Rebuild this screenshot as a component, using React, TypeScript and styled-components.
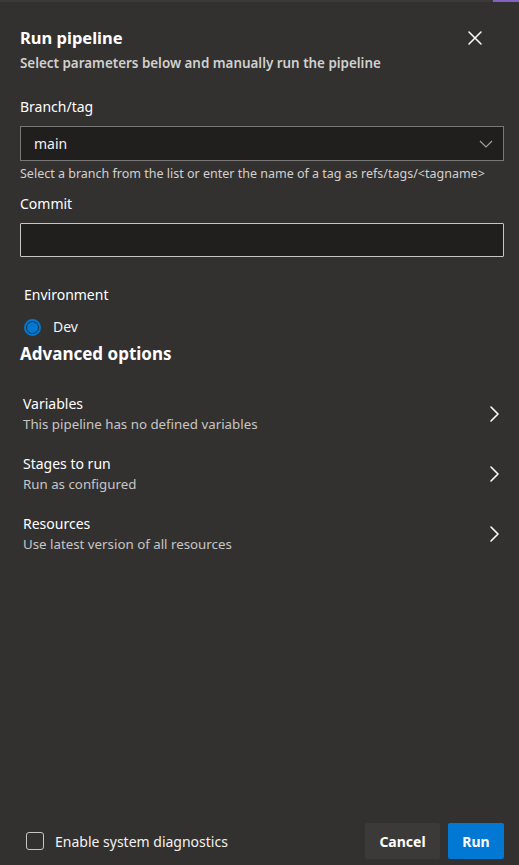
import React, { useState } from 'react';
import styled, { createGlobalStyle } from 'styled-components';

const GlobalStyle = createGlobalStyle`
  html, body {
    margin: 0;
    padding: 0;
    background: #323130;
  }
  * {
    box-sizing: border-box;
  }
`;

const Panel = styled.div`
  width: 519px;
  height: 865px;
  background: #323130;
  color: #ffffff;
  font-family: 'Segoe UI', 'Noto Sans', sans-serif;
  display: flex;
  flex-direction: column;
`;

// thin strip of the page behind the panel
const TopStrip = styled.div`
  height: 2px;
  flex-shrink: 0;
  display: flex;
  background: #3b3a39;
  justify-content: flex-end;
`;

const StripAccent = styled.div`
  width: 26px;
  background: #8661c5;
`;

const Body = styled.div`
  flex: 1;
  padding: 24px 16px 0 20px;
  display: flex;
  flex-direction: column;
`;

const Header = styled.div`
  display: flex;
  align-items: flex-start;
  justify-content: space-between;
`;

const Title = styled.h2`
  margin: 0;
  font-size: 16.5px;
  font-weight: 700;
  line-height: 24px;
  color: #ffffff;
`;

const CloseButton = styled.button`
  background: none;
  border: none;
  padding: 0;
  width: 32px;
  height: 32px;
  margin-top: -4px;
  margin-right: 12px;
  display: flex;
  align-items: center;
  justify-content: center;
  color: #ffffff;
  cursor: pointer;
`;

const Subtitle = styled.div`
  font-size: 13.4px;
  font-weight: 600;
  color: #d2d0ce;
  line-height: 18px;
  margin-top: 0;
`;

const Field = styled.div<{ $top: number }>`
  margin-top: ${p => p.$top}px;
  display: flex;
  flex-direction: column;
`;

const Label = styled.label<{ $indent?: number; $gap?: number }>`
  font-size: 14px;
  line-height: 20px;
  color: #ffffff;
  padding-left: ${p => p.$indent || 0}px;
  margin-bottom: ${p => p.$gap || 9}px;
`;

const SelectBox = styled.div`
  height: 35px;
  width: 484px;
  background: #201f1e;
  border: 1px solid #797775;
  display: flex;
  align-items: center;
  justify-content: space-between;
  padding: 0 10px 0 13px;
  font-size: 14px;
  color: #f3f2f1;
`;

const Hint = styled.div`
  font-size: 12.5px;
  line-height: 16px;
  color: #d2d0ce;
  margin-top: 5px;
`;

const TextInput = styled.input`
  height: 34px;
  width: 484px;
  background: #201f1e;
  border: 1px solid #c8c6c4;
  border-radius: 1px;
  outline: none;
  color: #ffffff;
  font-family: inherit;
  font-size: 14px;
  padding: 0 8px;
`;

const RadioRow = styled.label`
  display: flex;
  align-items: center;
  gap: 12px;
  padding-left: 4px;
  font-size: 14px;
  color: #f3f2f1;
  line-height: 20px;
`;

const RadioDot = styled.span`
  width: 17px;
  height: 17px;
  border-radius: 50%;
  border: 2px solid #0078d4;
  display: flex;
  align-items: center;
  justify-content: center;

  &::after {
    content: '';
    width: 11px;
    height: 11px;
    border-radius: 50%;
    background: #0078d4;
  }
`;

const SectionTitle = styled.h3`
  margin: 5px 0 0;
  font-size: 17px;
  font-weight: 700;
  line-height: 24px;
  color: #ffffff;
`;

const OptionList = styled.div`
  margin-top: 28px;
  display: flex;
  flex-direction: column;
  gap: 20px;
`;

const OptionRow = styled.div`
  display: flex;
  align-items: center;
  justify-content: space-between;
  padding-left: 3px;
  padding-right: 2px;
  cursor: pointer;
`;

const OptionText = styled.div`
  display: flex;
  flex-direction: column;
`;

const OptionName = styled.div`
  font-size: 14px;
  line-height: 20px;
  color: #ffffff;
`;

const OptionDesc = styled.div`
  font-size: 13.3px;
  line-height: 20px;
  color: #c8c6c4;
`;

const Footer = styled.div`
  display: flex;
  align-items: center;
  justify-content: space-between;
  padding: 0 15px 6px 26px;
  height: 42px;
  flex-shrink: 0;
`;

const CheckRow = styled.label`
  display: flex;
  align-items: center;
  gap: 11px;
  font-size: 14px;
  color: #f3f2f1;
`;

const CheckBox = styled.span`
  width: 18px;
  height: 18px;
  border: 1px solid #c8c6c4;
  border-radius: 3px;
`;

const Buttons = styled.div`
  display: flex;
  gap: 8px;
`;

const Button = styled.button<{ $primary?: boolean }>`
  height: 36px;
  padding: 0 14px;
  min-width: ${p => (p.$primary ? 56 : 75)}px;
  border: none;
  border-radius: 2px;
  font-family: inherit;
  font-size: 14px;
  font-weight: 700;
  color: #ffffff;
  background: ${p => (p.$primary ? '#0078d4' : '#3b3a39')};
  cursor: pointer;
`;

const Chevron = () => (
  <svg width="14" height="18" viewBox="0 0 14 18" fill="none">
    <path d="M4 2 L11 9 L4 16" stroke="#ffffff" strokeWidth="1.6" strokeLinecap="round" strokeLinejoin="round" />
  </svg>
);

const options = [
  { name: 'Variables', desc: 'This pipeline has no defined variables' },
  { name: 'Stages to run', desc: 'Run as configured' },
  { name: 'Resources', desc: 'Use latest version of all resources' },
];

export default function App() {
  const [commit, setCommit] = useState('');

  return (
    <>
      <GlobalStyle />
      <Panel>
        <TopStrip>
          <StripAccent />
        </TopStrip>
        <Body>
          <Header>
            <Title>Run pipeline</Title>
            <CloseButton aria-label="Close">
              <svg width="14" height="14" viewBox="0 0 14 14">
                <path d="M1 1 L13 13 M13 1 L1 13" stroke="#ffffff" strokeWidth="1.5" strokeLinecap="round" />
              </svg>
            </CloseButton>
          </Header>
          <Subtitle>Select parameters below and manually run the pipeline</Subtitle>

          <Field $top={25}>
            <Label>Branch/tag</Label>
            <SelectBox>
              <span>main</span>
              <svg width="14" height="8" viewBox="0 0 14 8">
                <path d="M1 1 L7 7 L13 1" stroke="#a19f9d" strokeWidth="1.2" fill="none" />
              </svg>
            </SelectBox>
            <Hint>Select a branch from the list or enter the name of a tag as refs/tags/&lt;tagname&gt;</Hint>
          </Field>

          <Field $top={12}>
            <Label>Commit</Label>
            <TextInput value={commit} onChange={e => setCommit(e.target.value)} />
          </Field>

          <Field $top={28}>
            <Label $indent={4} $gap={12}>Environment</Label>
            <RadioRow>
              <RadioDot />
              Dev
            </RadioRow>
          </Field>

          <SectionTitle>Advanced options</SectionTitle>

          <OptionList>
            {options.map(o => (
              <OptionRow key={o.name}>
                <OptionText>
                  <OptionName>{o.name}</OptionName>
                  <OptionDesc>{o.desc}</OptionDesc>
                </OptionText>
                <Chevron />
              </OptionRow>
            ))}
          </OptionList>
        </Body>
        <Footer>
          <CheckRow>
            <CheckBox />
            Enable system diagnostics
          </CheckRow>
          <Buttons>
            <Button>Cancel</Button>
            <Button $primary>Run</Button>
          </Buttons>
        </Footer>
      </Panel>
    </>
  );
}
